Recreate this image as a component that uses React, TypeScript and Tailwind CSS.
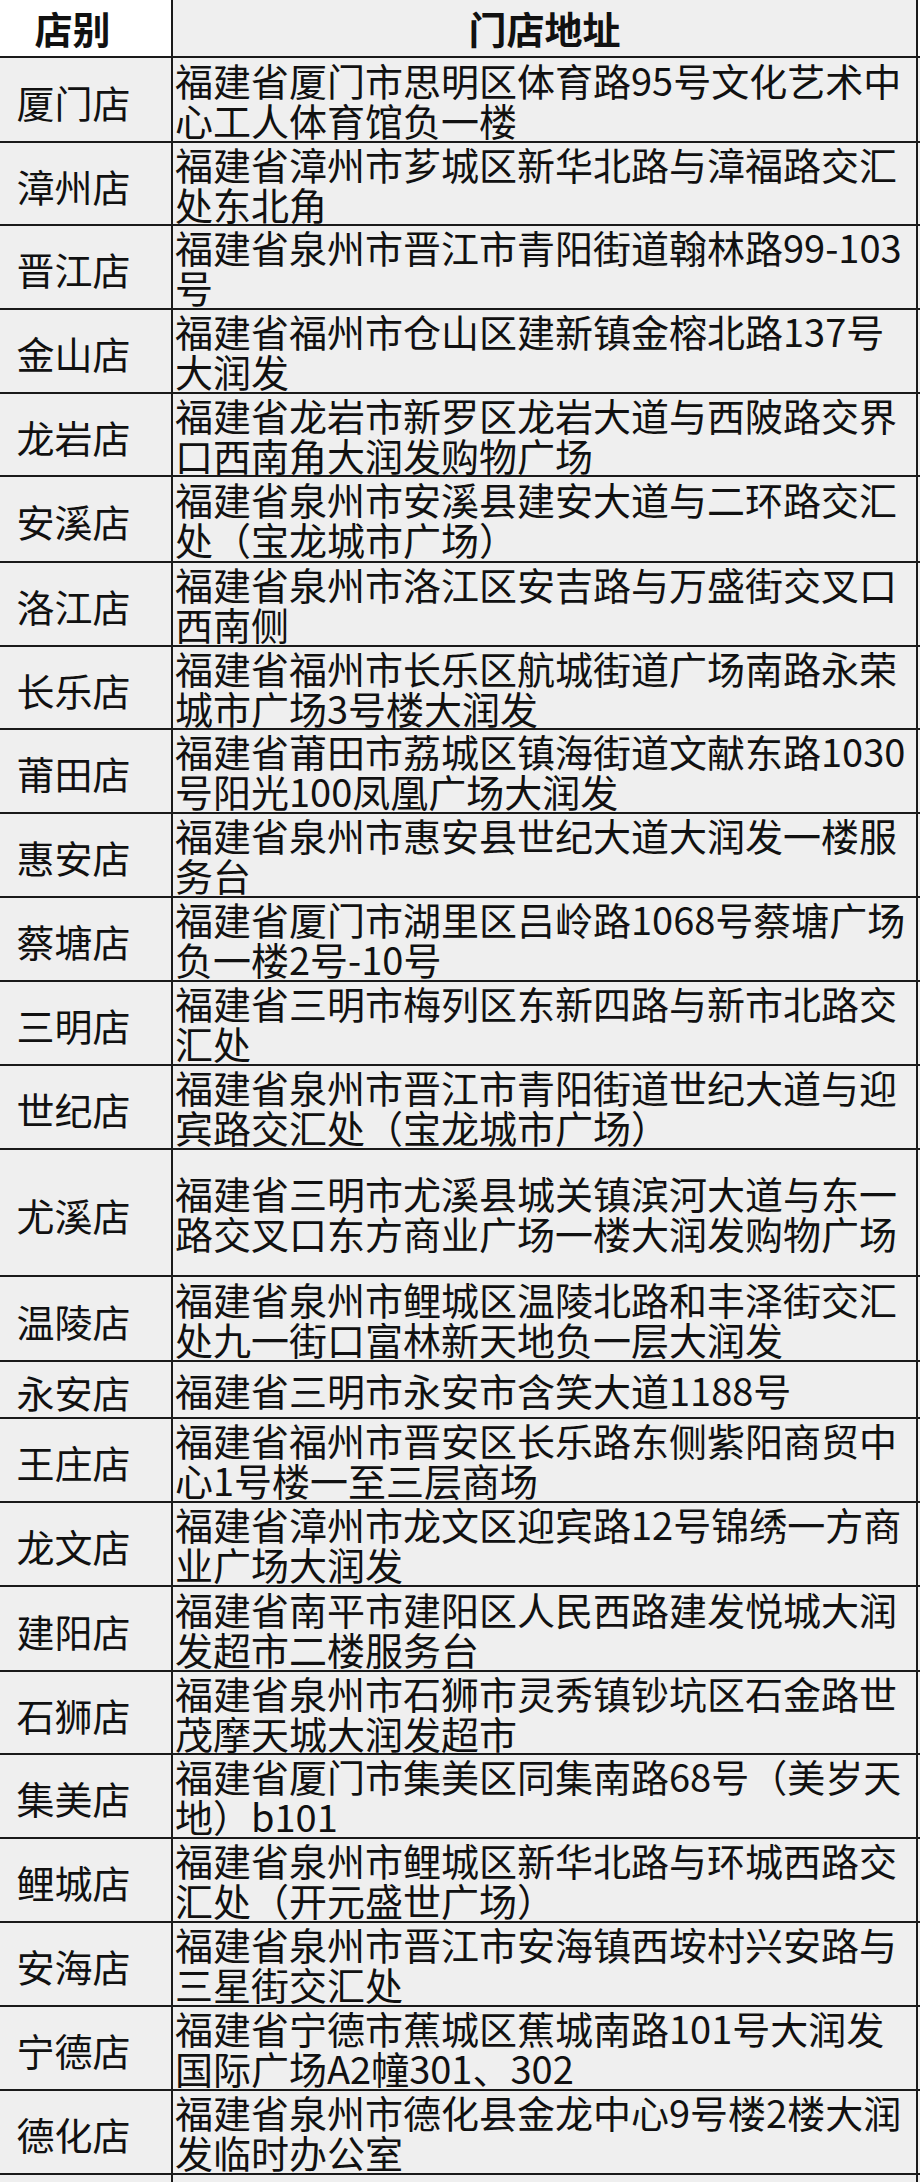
import React from "react";

type Store = { name: string; lines: string[]; h: string };

const stores: Store[] = [
  { name: "厦门店", h: "h-[85px]", lines: ["福建省厦门市思明区体育路95号文化艺术中", "心工人体育馆负一楼"] },
  { name: "漳州店", h: "h-[83px]", lines: ["福建省漳州市芗城区新华北路与漳福路交汇", "处东北角"] },
  { name: "晋江店", h: "h-[84px]", lines: ["福建省泉州市晋江市青阳街道翰林路99-103", "号"] },
  { name: "金山店", h: "h-[84px]", lines: ["福建省福州市仓山区建新镇金榕北路137号", "大润发"] },
  { name: "龙岩店", h: "h-[83px]", lines: ["福建省龙岩市新罗区龙岩大道与西陂路交界", "口西南角大润发购物广场"] },
  { name: "安溪店", h: "h-[86px]", lines: ["福建省泉州市安溪县建安大道与二环路交汇", "处（宝龙城市广场）"] },
  { name: "洛江店", h: "h-[84px]", lines: ["福建省泉州市洛江区安吉路与万盛街交叉口", "西南侧"] },
  { name: "长乐店", h: "h-[83px]", lines: ["福建省福州市长乐区航城街道广场南路永荣", "城市广场3号楼大润发"] },
  { name: "莆田店", h: "h-[84px]", lines: ["福建省莆田市荔城区镇海街道文献东路1030", "号阳光100凤凰广场大润发"] },
  { name: "惠安店", h: "h-[84px]", lines: ["福建省泉州市惠安县世纪大道大润发一楼服", "务台"] },
  { name: "蔡塘店", h: "h-[84px]", lines: ["福建省厦门市湖里区吕岭路1068号蔡塘广场", "负一楼2号-10号"] },
  { name: "三明店", h: "h-[84px]", lines: ["福建省三明市梅列区东新四路与新市北路交", "汇处"] },
  { name: "世纪店", h: "h-[84px]", lines: ["福建省泉州市晋江市青阳街道世纪大道与迎", "宾路交汇处（宝龙城市广场）"] },
  { name: "尤溪店", h: "h-[127px]", lines: ["福建省三明市尤溪县城关镇滨河大道与东一", "路交叉口东方商业广场一楼大润发购物广场"] },
  { name: "温陵店", h: "h-[85px]", lines: ["福建省泉州市鲤城区温陵北路和丰泽街交汇", "处九一街口富林新天地负一层大润发"] },
  { name: "永安店", h: "h-[57px]", lines: ["福建省三明市永安市含笑大道1188号"] },
  { name: "王庄店", h: "h-[84px]", lines: ["福建省福州市晋安区长乐路东侧紫阳商贸中", "心1号楼一至三层商场"] },
  { name: "龙文店", h: "h-[84px]", lines: ["福建省漳州市龙文区迎宾路12号锦绣一方商", "业广场大润发"] },
  { name: "建阳店", h: "h-[85px]", lines: ["福建省南平市建阳区人民西路建发悦城大润", "发超市二楼服务台"] },
  { name: "石狮店", h: "h-[83px]", lines: ["福建省泉州市石狮市灵秀镇钞坑区石金路世", "茂摩天城大润发超市"] },
  { name: "集美店", h: "h-[84px]", lines: ["福建省厦门市集美区同集南路68号（美岁天", "地）b101"] },
  { name: "鲤城店", h: "h-[84px]", lines: ["福建省泉州市鲤城区新华北路与环城西路交", "汇处（开元盛世广场）"] },
  { name: "安海店", h: "h-[84px]", lines: ["福建省泉州市晋江市安海镇西垵村兴安路与", "三星街交汇处"] },
  { name: "宁德店", h: "h-[84px]", lines: ["福建省宁德市蕉城区蕉城南路101号大润发", "国际广场A2幢301、302"] },
  { name: "德化店", h: "h-[84px]", lines: ["福建省泉州市德化县金龙中心9号楼2楼大润", "发临时办公室"] },
  { name: "", h: "h-[84px]", lines: [] },
];

export default function App() {
  return (
    <div
      className="w-[920px] bg-white text-[38px] leading-[40px] text-[#111]"
      style={{ fontFamily: '"Noto Sans CJK SC", "Noto Sans", sans-serif' }}
    >
      {/* header */}
      <div className="flex h-[58px] border-b-2 border-[#1a1a1a]">
        <div className="flex w-[173px] shrink-0 items-center justify-center border-r-2 border-[#1a1a1a] bg-white pr-[26px] font-bold">
          店别
        </div>
        <div className="flex w-[745px] shrink-0 items-center justify-center border-r-2 border-[#1a1a1a] bg-[#efefef] font-bold">
          门店地址
        </div>
      </div>

      {stores.map((s, i) => (
        <div key={i} className={`flex ${s.h} border-b-2 border-[#1a1a1a] bg-[#efefef]`}>
          <div className="flex w-[173px] shrink-0 items-center justify-center border-r-2 border-[#1a1a1a] pr-[24px] pt-[4px]">
            {s.name}
          </div>
          <div className="flex w-[745px] shrink-0 flex-col justify-center border-r-2 border-[#1a1a1a] pl-[2px]">
            {s.lines.map((l, j) => (
              <div key={j} className="whitespace-nowrap">
                {l}
              </div>
            ))}
          </div>
        </div>
      ))}
    </div>
  );
}
